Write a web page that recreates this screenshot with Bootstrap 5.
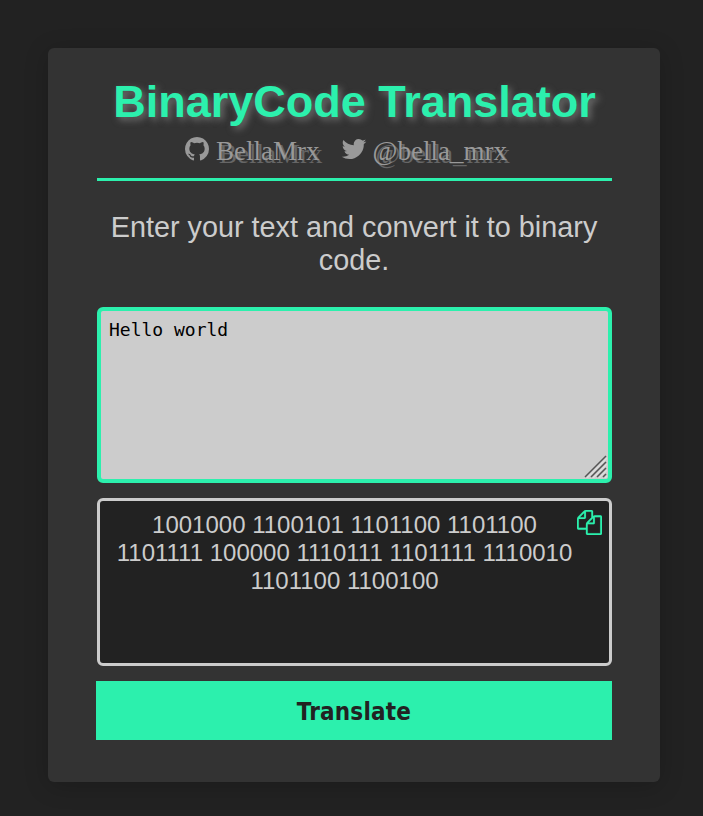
<!DOCTYPE html>
<html lang="en">
<head>
<meta charset="utf-8">
<meta name="viewport" content="width=device-width, initial-scale=1">
<title>BinaryCode Translator</title>
<link href="https://cdn.jsdelivr.net/npm/bootstrap@5.3.0/dist/css/bootstrap.min.css" rel="stylesheet">
<style>
:root{--mint:#2cf0ad}
body{background:#222;color:#ccc;font-family:"Liberation Sans",Arial,sans-serif;height:816px;overflow:hidden}
.panel{width:612px;height:734px;margin:48px 0 0 48px;padding:24px 48px 0 49px;background:#333;border-radius:6px;box-shadow:0 4px 24px rgba(0,0,0,.2)}
.title{font-size:45px;font-weight:700;line-height:60px;color:var(--mint);text-shadow:3px 3px 7px #707070;white-space:nowrap}
.head{height:109px;border-bottom:3px solid var(--mint)}
.social{font:27px/34px "Liberation Serif",serif;color:#999;text-shadow:3px 3px 0 #666;gap:20px;margin:2px 0 0 -19px}
.social a{color:inherit;gap:5px}
.social svg{width:28px;height:28px;margin-top:-4px}
.intro{font-size:28.8px;line-height:33px;margin:30px 0 30px -1px}
.source{height:176px;border:4px solid var(--mint);border-radius:6px;background:#ccc;color:#000;padding:8px;font:18px/22px "DejaVu Sans Mono",monospace;resize:none;outline:0}
.grip{right:5px;bottom:5px;width:23px;height:23px;pointer-events:none}
.result{height:168px;margin-top:15px;border:3px solid #ccc;border-radius:6px;background:#222;font-size:24px;line-height:28px;padding:10px 33px 0 13px}
.copy{right:7px;top:9px;width:25px;height:25px;color:var(--mint);stroke:currentColor;stroke-width:12}
.go{height:59px;width:516px;margin:15px 0 0 -1px;padding-top:8px;background:var(--mint);color:#222;font:700 24px/28px "DejaVu Sans Condensed","DejaVu Sans",sans-serif;font-stretch:condensed;letter-spacing:.2px}
</style>
<script src="https://cdn.jsdelivr.net/npm/bootstrap@5.3.0/dist/js/bootstrap.bundle.min.js"></script>
</head>
<body>
<main class="panel d-flex flex-column">
  <header class="head flex-shrink-0 text-center">
    <h1 class="title m-0"><span>BinaryCode Translator</span></h1>
    <div class="social d-flex justify-content-center">
      <a href="#" class="d-flex align-items-center text-decoration-none"><svg viewBox="0 0 1792 1792" fill="currentColor"><path d="M1664 896q0 251-146.5 451.5t-378.5 277.5q-27 5-40-7t-13-30q0-3 .5-76.5t.5-134.5q0-97-52-142 57-6 102.5-18t94-39 81-66.5 53-105 20.5-150.5q0-119-79-206 37-91-8-204-28-9-81 11t-92 44l-38 24q-93-26-192-26t-192 26q-16-11-42.5-27t-83.5-38.5-85-13.5q-45 113-8 204-79 87-79 206 0 85 20.5 150t52.5 105 80.5 67 94 39 102.5 18q-39 36-49 103-21 10-45 15t-57 5-65.5-21.5-55.5-62.5q-19-32-48.5-52t-49.5-24l-20-3q-21 0-29 4.5t-5 11.5 9 14 13 12l7 5q22 10 43.5 38t31.5 51l10 23q13 38 44 61.5t67 30 69.5 7 55.5-3.5l23-4q0 38 .5 88.5t.5 54.5q0 18-13 30t-40 7q-232-77-378.5-277.5t-146.5-451.5q0-209 103-385.5t279.5-279.5 385.5-103 385.5 103 279.5 279.5 103 385.5z"/></svg><span>BellaMrx</span></a>
      <a href="#" class="d-flex align-items-center text-decoration-none"><svg viewBox="0 0 1792 1792" fill="currentColor"><path d="M1684 408q-67 98-162 167 1 14 1 42 0 130-38 259.5t-115.5 248.5-184.5 210.5-258 146-323 54.5q-271 0-496-145 35 4 78 4 225 0 401-138-105-2-188-64.5t-114-159.5q33 5 61 5 43 0 85-11-112-23-185.5-111.5t-73.5-205.5v-4q68 38 146 41-66-44-105-115t-39-154q0-88 44-163 121 149 294.5 238.5t371.5 99.5q-8-38-8-74 0-134 94.5-228.5t228.5-94.5q140 0 236 102 109-21 205-78-37 115-142 178 93-10 186-50z"/></svg><span>@bella_mrx</span></a>
    </div>
  </header>
  <p class="intro text-center">Enter your text and convert it to binary code.</p>
  <div class="position-relative d-flex">
    <textarea class="source w-100" spellcheck="false" aria-label="Text">Hello world</textarea>
    <svg class="grip position-absolute" viewBox="0 0 23 23" fill="none" stroke-width="1.5"><path stroke="#ddd" d="M3 23L23 3M9 23L23 9M15 23L23 15M21 23l2-2"/><path stroke="#555" d="M1 22L22 1M7 22L22 7M13 22l9-9M19 22l3-3"/></svg>
  </div>
  <div class="result position-relative text-center">1001000 1100101 1101100 1101100 1101111 100000 1110111 1101111 1110010 1101100 1100100
    <svg class="copy position-absolute" viewBox="0 0 1792 1792" fill="currentColor"><path d="M1696 384q40 0 68 28t28 68v1216q0 40-28 68t-68 28h-960q-40 0-68-28t-28-68v-288h-544q-40 0-68-28t-28-68v-672q0-40 20-88t48-76l408-408q28-28 76-48t88-20h416q40 0 68 28t28 68v328q68-40 128-40h416zm-544 213l-299 299h299v-299zm-640-384l-299 299h299v-299zm196 647l316-316v-416h-384v416q0 40-28 68t-68 28h-416v640h512v-256q0-40 20-88t48-76zm956 804v-1152h-384v416q0 40-28 68t-68 28h-416v640h896z"/></svg>
  </div>
  <button type="button" class="go btn rounded-0 border-0 flex-shrink-0">Translate</button>
</main>
</body>
</html>
